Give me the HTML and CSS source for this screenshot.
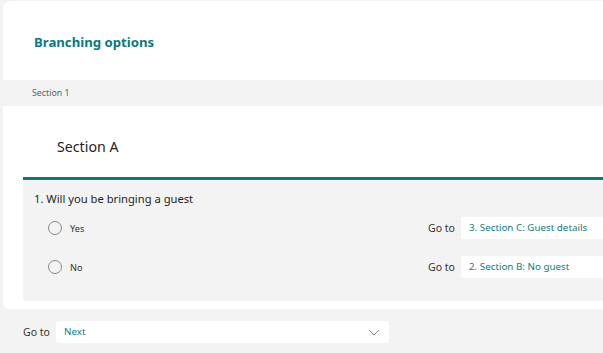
FILE: index.html
```html
<!DOCTYPE html>
<html lang="en">
<head>
<meta charset="utf-8">
<title>Branching options</title>
<link rel="stylesheet" href="styles.css">
</head>
<body>
<div class="page">
  <div class="header-card">
    <h1 class="title">Branching options</h1>
  </div>
  <div class="section-label">Section 1</div>
  <div class="section-card">
    <h2 class="section-title">Section A</h2>
    <div class="question">
      <div class="question-text">1. Will you be bringing a guest</div>
      <div class="option-row">
        <div class="option-left">
          <span class="radio"></span>
          <span class="option-label">Yes</span>
        </div>
        <span class="goto-label">Go to</span>
        <div class="select wide">3. Section C: Guest details</div>
      </div>
      <div class="option-row">
        <div class="option-left">
          <span class="radio"></span>
          <span class="option-label">No</span>
        </div>
        <span class="goto-label">Go to</span>
        <div class="select wide">2. Section B: No guest</div>
      </div>
    </div>
  </div>
  <div class="footer">
    <span class="goto-label">Go to</span>
    <div class="select footer-select">
      <span>Next</span>
      <svg class="chevron" width="12" height="7" viewBox="0 0 12 7"><path d="M1 1 L6 6 L11 1" fill="none" stroke="#8a8886" stroke-width="1"/></svg>
    </div>
  </div>
</div>
</body>
</html>
```

FILE: styles.css
```css
html, body {
  margin: 0;
  padding: 0;
}
body {
  background: #f3f3f3;
  font-family: "Noto Sans", "Open Sans", sans-serif;
  color: #323130;
  overflow: hidden;
  width: 603px;
  height: 353px;
}
.page {
  width: 760px;
  padding: 1px 0 0 3px;
}
.header-card {
  background: #fff;
  border-radius: 8px 0 0 0;
  height: 79px;
  padding: 31px 0 0 31px;
  box-sizing: border-box;
}
.title {
  margin: 0;
  font-size: 13.2px;
  line-height: 20px;
  font-weight: 700;
  color: #0a7a7e;
}
.section-label {
  height: 26px;
  line-height: 26px;
  padding-left: 29px;
  font-size: 8.8px;
  color: #605e5c;
}
.section-card {
  background: #fff;
  padding: 30px 0 8px 20px;
  border-radius: 0 0 0 6px;
}
.section-title {
  margin: 0 0 19px 34px;
  font-size: 14.2px;
  line-height: 22px;
  font-weight: 400;
  color: #252424;
}
.question {
  background: #f3f3f3;
  border-top: 3px solid #0b777b;
  border-radius: 0 0 0 4px;
  padding: 10px 0 23px 11px;
}
.question-text {
  font-size: 11.2px;
  line-height: 18px;
  color: #252424;
  margin-bottom: 9px;
}
.option-row {
  display: flex;
  align-items: center;
  height: 22px;
  margin-bottom: 17px;
}
.option-row:last-child {
  margin-bottom: 0;
}
.option-left {
  display: flex;
  align-items: center;
  width: 394px;
  padding-left: 14px;
  box-sizing: border-box;
}
.radio {
  width: 12px;
  height: 12px;
  border: 1px solid #8a8886;
  border-radius: 50%;
  box-sizing: border-box;
  width: 14px;
  height: 14px;
}
.option-label {
  margin-left: 8px;
  font-size: 9.2px;
  color: #323130;
}
.goto-label {
  font-size: 10.5px;
  color: #323130;
  width: 33px;
  flex: 0 0 33px;
}
.select {
  background: #fff;
  border-radius: 3px;
  height: 22px;
  line-height: 22px;
  box-sizing: border-box;
  padding-left: 8px;
  font-size: 9.8px;
  color: #117c80;
}
.select.wide {
  width: 220px;
}
.footer {
  display: flex;
  align-items: center;
  padding: 12px 0 0 20px;
}
.footer-select {
  width: 333px;
  display: flex;
  align-items: center;
  justify-content: space-between;
  padding-right: 9px;
}
.chevron {
  display: block;
}
```
